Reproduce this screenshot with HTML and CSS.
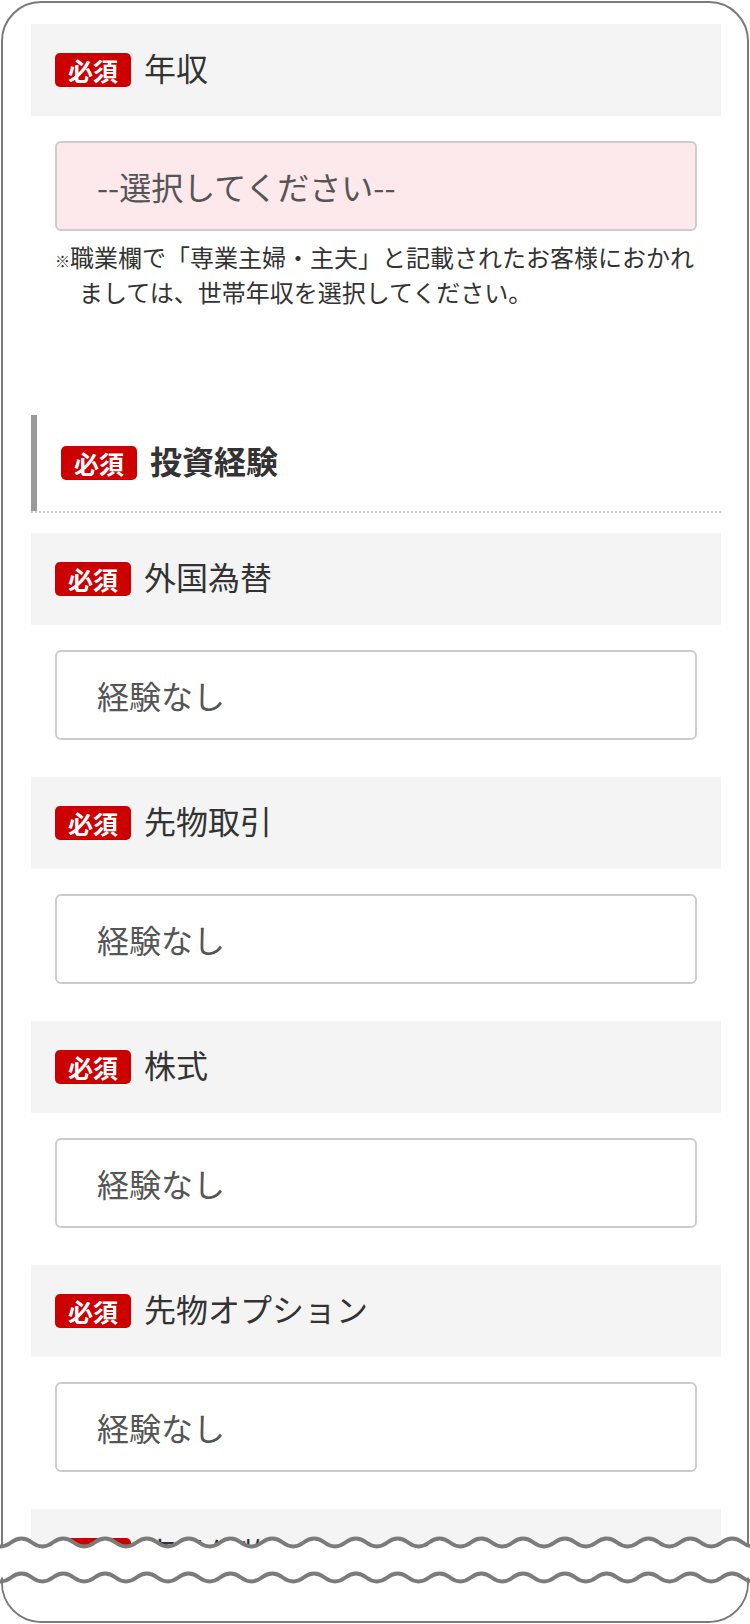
FILE: index.html
```html
<!DOCTYPE html>
<html lang="ja">
<head>
<meta charset="utf-8">
<title>投資経験</title>
<link rel="stylesheet" href="styles.css">
</head>
<body>
<div class="frame">
  <div class="content">
    <div class="field">
      <div class="field-label"><span class="badge">必須</span><span class="label">年収</span></div>
      <div class="select pink">--選択してください--</div>
    </div>
    <p class="note"><span class="kome">※</span>職業欄で「専業主婦・主夫」と記載されたお客様におかれましては、世帯年収を選択してください。</p>

    <div class="section-head">
      <div class="section-inner"><span class="badge">必須</span><span class="section-title">投資経験</span></div>
    </div>

    <div class="fields">
      <div class="field">
        <div class="field-label"><span class="badge">必須</span><span class="label">外国為替</span></div>
        <div class="select">経験なし</div>
      </div>
      <div class="field">
        <div class="field-label"><span class="badge">必須</span><span class="label">先物取引</span></div>
        <div class="select">経験なし</div>
      </div>
      <div class="field">
        <div class="field-label"><span class="badge">必須</span><span class="label">株式</span></div>
        <div class="select">経験なし</div>
      </div>
      <div class="field">
        <div class="field-label"><span class="badge">必須</span><span class="label">先物オプション</span></div>
        <div class="select">経験なし</div>
      </div>
      <div class="field">
        <div class="field-label"><span class="badge">必須</span><span class="label">商品先物</span></div>
        <div class="select">経験なし</div>
      </div>
    </div>
  </div>
  <div class="cut-fill"></div>
</div>
<svg class="wave" width="750" height="52" viewBox="0 0 750 52" aria-hidden="true">
  <path class="wave-fill" d="M-20.3,8.6 c10.45,0 10.45,7.8 20.9,7.8 s10.45,-7.8 20.9,-7.8 s10.45,7.8 20.9,7.8 s10.45,-7.8 20.9,-7.8 s10.45,7.8 20.9,7.8 s10.45,-7.8 20.9,-7.8 s10.45,7.8 20.9,7.8 s10.45,-7.8 20.9,-7.8 s10.45,7.8 20.9,7.8 s10.45,-7.8 20.9,-7.8 s10.45,7.8 20.9,7.8 s10.45,-7.8 20.9,-7.8 s10.45,7.8 20.9,7.8 s10.45,-7.8 20.9,-7.8 s10.45,7.8 20.9,7.8 s10.45,-7.8 20.9,-7.8 s10.45,7.8 20.9,7.8 s10.45,-7.8 20.9,-7.8 s10.45,7.8 20.9,7.8 s10.45,-7.8 20.9,-7.8 s10.45,7.8 20.9,7.8 s10.45,-7.8 20.9,-7.8 s10.45,7.8 20.9,7.8 s10.45,-7.8 20.9,-7.8 s10.45,7.8 20.9,7.8 s10.45,-7.8 20.9,-7.8 s10.45,7.8 20.9,7.8 s10.45,-7.8 20.9,-7.8 s10.45,7.8 20.9,7.8 s10.45,-7.8 20.9,-7.8 s10.45,7.8 20.9,7.8 s10.45,-7.8 20.9,-7.8 s10.45,7.8 20.9,7.8 s10.45,-7.8 20.9,-7.8 s10.45,7.8 20.9,7.8 s10.45,-7.8 20.9,-7.8 s10.45,7.8 20.9,7.8 L753,47.5 L-20.3,47.5 Z"/>
  <path class="wave-line" d="M-20.3,8.6 c10.45,0 10.45,7.8 20.9,7.8 s10.45,-7.8 20.9,-7.8 s10.45,7.8 20.9,7.8 s10.45,-7.8 20.9,-7.8 s10.45,7.8 20.9,7.8 s10.45,-7.8 20.9,-7.8 s10.45,7.8 20.9,7.8 s10.45,-7.8 20.9,-7.8 s10.45,7.8 20.9,7.8 s10.45,-7.8 20.9,-7.8 s10.45,7.8 20.9,7.8 s10.45,-7.8 20.9,-7.8 s10.45,7.8 20.9,7.8 s10.45,-7.8 20.9,-7.8 s10.45,7.8 20.9,7.8 s10.45,-7.8 20.9,-7.8 s10.45,7.8 20.9,7.8 s10.45,-7.8 20.9,-7.8 s10.45,7.8 20.9,7.8 s10.45,-7.8 20.9,-7.8 s10.45,7.8 20.9,7.8 s10.45,-7.8 20.9,-7.8 s10.45,7.8 20.9,7.8 s10.45,-7.8 20.9,-7.8 s10.45,7.8 20.9,7.8 s10.45,-7.8 20.9,-7.8 s10.45,7.8 20.9,7.8 s10.45,-7.8 20.9,-7.8 s10.45,7.8 20.9,7.8 s10.45,-7.8 20.9,-7.8 s10.45,7.8 20.9,7.8 s10.45,-7.8 20.9,-7.8 s10.45,7.8 20.9,7.8 s10.45,-7.8 20.9,-7.8 s10.45,7.8 20.9,7.8 s10.45,-7.8 20.9,-7.8 s10.45,7.8 20.9,7.8"/>
  <path class="wave-line" transform="translate(0,35)" d="M-20.3,8.6 c10.45,0 10.45,7.8 20.9,7.8 s10.45,-7.8 20.9,-7.8 s10.45,7.8 20.9,7.8 s10.45,-7.8 20.9,-7.8 s10.45,7.8 20.9,7.8 s10.45,-7.8 20.9,-7.8 s10.45,7.8 20.9,7.8 s10.45,-7.8 20.9,-7.8 s10.45,7.8 20.9,7.8 s10.45,-7.8 20.9,-7.8 s10.45,7.8 20.9,7.8 s10.45,-7.8 20.9,-7.8 s10.45,7.8 20.9,7.8 s10.45,-7.8 20.9,-7.8 s10.45,7.8 20.9,7.8 s10.45,-7.8 20.9,-7.8 s10.45,7.8 20.9,7.8 s10.45,-7.8 20.9,-7.8 s10.45,7.8 20.9,7.8 s10.45,-7.8 20.9,-7.8 s10.45,7.8 20.9,7.8 s10.45,-7.8 20.9,-7.8 s10.45,7.8 20.9,7.8 s10.45,-7.8 20.9,-7.8 s10.45,7.8 20.9,7.8 s10.45,-7.8 20.9,-7.8 s10.45,7.8 20.9,7.8 s10.45,-7.8 20.9,-7.8 s10.45,7.8 20.9,7.8 s10.45,-7.8 20.9,-7.8 s10.45,7.8 20.9,7.8 s10.45,-7.8 20.9,-7.8 s10.45,7.8 20.9,7.8 s10.45,-7.8 20.9,-7.8 s10.45,7.8 20.9,7.8 s10.45,-7.8 20.9,-7.8 s10.45,7.8 20.9,7.8"/>
</svg>
</body>
</html>
```

FILE: styles.css
```css
html, body {
  margin: 0;
  padding: 0;
}

body {
  width: 750px;
  height: 1624px;
  position: relative;
  overflow: hidden;
  background: #fff;
  font-family: "Noto Sans CJK JP", "Noto Sans", sans-serif;
  color: #333;
}

.frame {
  margin: 1px;
  height: 1622px;
  box-sizing: border-box;
  border: 2px solid #7a7a7a;
  border-radius: 40px;
  position: relative;
  overflow: hidden;
  background: #fff;
}

.content {
  padding: 21px 26px 0 28px;
}

.field-label {
  height: 92px;
  background: #f4f4f4;
  display: flex;
  align-items: center;
  padding-left: 24px;
}

.badge {
  flex: none;
  width: 76px;
  height: 34px;
  background: #cc0000;
  color: #fff;
  border-radius: 5px;
  font-size: 25px;
  font-weight: 700;
  line-height: 1;
  display: flex;
  align-items: center;
  justify-content: center;
}

.label {
  margin-left: 13px;
  margin-bottom: 6px;
  font-size: 32px;
  line-height: 1;
  color: #333;
}

.select {
  margin: 25px 24px 0;
  height: 90px;
  box-sizing: border-box;
  border: 2px solid #cccccc;
  border-radius: 6px;
  background: #fff;
  display: flex;
  align-items: center;
  padding-left: 40px;
  font-size: 32px;
  line-height: 1;
  color: #555;
}

.select.pink {
  background: #fde8eb;
}

.note {
  margin: 10px 24px 0 24px;
  padding-left: 24px;
  text-indent: -24px;
  font-size: 24px;
  line-height: 31px;
  color: #333;
}

.kome {
  font-size: 15px;
}

.section-head {
  margin-top: 108px;
  border-bottom: 2px dotted #cccccc;
}

.section-inner {
  height: 96px;
  border-left: 6px solid #999999;
  display: flex;
  align-items: center;
  padding-left: 24px;
}

.section-title {
  margin-left: 13px;
  margin-bottom: 6px;
  font-size: 32px;
  font-weight: 700;
  line-height: 1;
  color: #333;
}

.fields {
  margin-top: 20px;
}

.field + .field {
  margin-top: 37px;
}

.cut-fill {
  position: absolute;
  left: 0;
  right: 0;
  top: 1545px;
  bottom: 0;
  background: #fff;
}

.wave {
  position: absolute;
  left: 0;
  top: 1530px;
  overflow: visible;
}

.wave-fill {
  fill: #fff;
}

.wave-line {
  fill: none;
  stroke: #7b7b7b;
  stroke-width: 4;
}
```
